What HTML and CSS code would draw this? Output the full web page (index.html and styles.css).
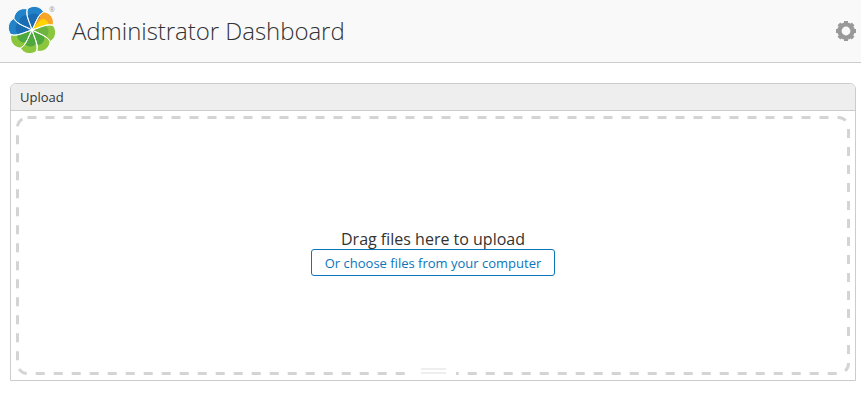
FILE: index.html
```html
<!DOCTYPE html>
<html lang="en">

<head>
    <meta charset="UTF-8">
    <title>Administrator Dashboard</title>
    <link rel="stylesheet" href="styles.css">
</head>

<body>

    <header class="top-bar">
        <div class="logo">
            <svg width="56" height="56" viewBox="-28 -28 56 56">
                <defs>
                    <path id="petal" d="M0 0C-4 -8 -9 -13 -8.2 -19.9A10.5 10.5 0 0 1 8.2 -19.9C3 -15.5 2.8 -8.5 0 0Z"/>
                </defs>
                <use href="#petal" fill="#f7a427" transform="rotate(55)"/>
                <use href="#petal" fill="#ffd400" transform="rotate(68) scale(.75)"/>
                <use href="#petal" fill="#2383c9" transform="rotate(10)"/>
                <use href="#petal" fill="#1a6db3" transform="rotate(10) scale(.7)"/>
                <use href="#petal" fill="#8cc63f" transform="rotate(100)"/>
                <use href="#petal" fill="#6cb33f" transform="rotate(100) scale(.7)"/>
                <use href="#petal" fill="#8cc63f" transform="rotate(145)"/>
                <use href="#petal" fill="#4fa83d" transform="rotate(145) scale(.7)"/>
                <use href="#petal" fill="#8cc63f" transform="rotate(190)"/>
                <use href="#petal" fill="#4fa83d" transform="rotate(190) scale(.7)"/>
                <use href="#petal" fill="#8cc63f" transform="rotate(235)"/>
                <use href="#petal" fill="#4fa83d" transform="rotate(235) scale(.7)"/>
                <use href="#petal" fill="#2383c9" transform="rotate(280)"/>
                <use href="#petal" fill="#1a6db3" transform="rotate(280) scale(.7)"/>
                <use href="#petal" fill="#2383c9" transform="rotate(325)"/>
                <use href="#petal" fill="#1a6db3" transform="rotate(325) scale(.7)"/>
                <g fill="none" stroke="#fff" stroke-width="0.9">
                    <use href="#petal" transform="rotate(10)"/>
                    <use href="#petal" transform="rotate(55)"/>
                    <use href="#petal" transform="rotate(100)"/>
                    <use href="#petal" transform="rotate(145)"/>
                    <use href="#petal" transform="rotate(190)"/>
                    <use href="#petal" transform="rotate(235)"/>
                    <use href="#petal" transform="rotate(280)"/>
                    <use href="#petal" transform="rotate(325)"/>
                </g>
                <text class="reg-mark" x="20" y="-18.5" text-anchor="middle">®</text>
            </svg>
        </div>
        <h1 class="title">Administrator Dashboard</h1>
        <svg class="gear" width="20" height="20" viewBox="-10 -10 20 20">
            <circle r="6.5" fill="none" stroke="#999" stroke-width="4.4"/>
            <g fill="#999">
                <rect x="-2" y="-10" width="4" height="20"/>
                <rect x="-2" y="-10" width="4" height="20" transform="rotate(45)"/>
                <rect x="-2" y="-10" width="4" height="20" transform="rotate(90)"/>
                <rect x="-2" y="-10" width="4" height="20" transform="rotate(135)"/>
            </g>
            <circle r="4.4" fill="#f9f9f9"/>
        </svg>
    </header>

    <section class="panel">
        <div class="panel-head">Upload</div>
        <div class="panel-body">
            <div class="drop-zone">
                <svg class="dash-line" width="834" height="259" viewBox="0 0 834 259">
                    <rect x="1.5" y="1.5" width="831" height="256" rx="10" fill="none" stroke="#d4d4d4" stroke-width="3" stroke-dasharray="9 9"/>
                </svg>
                <p class="drop-text">Drag files here to upload</p>
                <button class="pick-btn" type="button">Or choose files from your computer</button>
                <div class="resize-grip"></div>
            </div>
        </div>
    </section>

</body>

</html>
```

FILE: styles.css
```css
html,
body {
    margin: 0;
    padding: 0;
    height: 401px;
    overflow: hidden;
    background-color: #fff;
}

body {
    font-family: "Open Sans", sans-serif;
    color: #333;
}

.top-bar {
    display: flex;
    align-items: center;
    height: 62px;
    padding-right: 5px;
    border-bottom: 1px solid #ccc;
    background-color: #f9f9f9;
}

.logo {
    width: 72px;
    height: 62px;
    padding-left: 4px;
    padding-top: 2px;
    box-sizing: border-box;
}

.reg-mark {
    font-size: 7px;
    fill: #999;
}

.title {
    flex: 1;
    margin: 0 0 2px;
    font-size: 24px;
    font-weight: 300;
    letter-spacing: -0.04px;
    color: #333;
}

.gear {
    margin-bottom: 1px;
}

.panel {
    margin: 20px 5px 0 10px;
    height: 298px;
    box-sizing: border-box;
    border: 1px solid #ccc;
    border-radius: 6px 6px 0 0;
}

.panel-head {
    height: 26px;
    line-height: 26px;
    padding-left: 9px;
    font-size: 13px;
    color: #333;
    background-color: #eee;
    border-bottom: 1px solid #ccc;
    border-radius: 6px 6px 0 0;
}

.panel-body {
    padding: 5px 5px 0 5px;
}

.drop-zone {
    position: relative;
    height: 259px;
    padding-top: 14px;
    box-sizing: border-box;
    display: flex;
    flex-direction: column;
    align-items: center;
    justify-content: center;
}

.dash-line {
    position: absolute;
    left: 0;
    top: 0;
}

.drop-text {
    margin: 0;
    font-size: 16px;
    line-height: 20px;
    color: #333;
}

.pick-btn {
    position: relative;
    width: 244px;
    height: 27px;
    padding: 0;
    font-family: inherit;
    font-size: 13px;
    color: #0b75bb;
    background-color: #fff;
    border: 1px solid #0b75bb;
    border-radius: 3px;
}

.resize-grip {
    position: absolute;
    left: 395px;
    bottom: 0;
    width: 45px;
    height: 8px;
    background-color: #fff;
}

.resize-grip::before {
    content: "";
    display: block;
    width: 25px;
    height: 2px;
    margin-left: 10px;
    margin-top: 1px;
    border-top: 2px solid #eee;
    border-bottom: 2px solid #eee;
}
```
